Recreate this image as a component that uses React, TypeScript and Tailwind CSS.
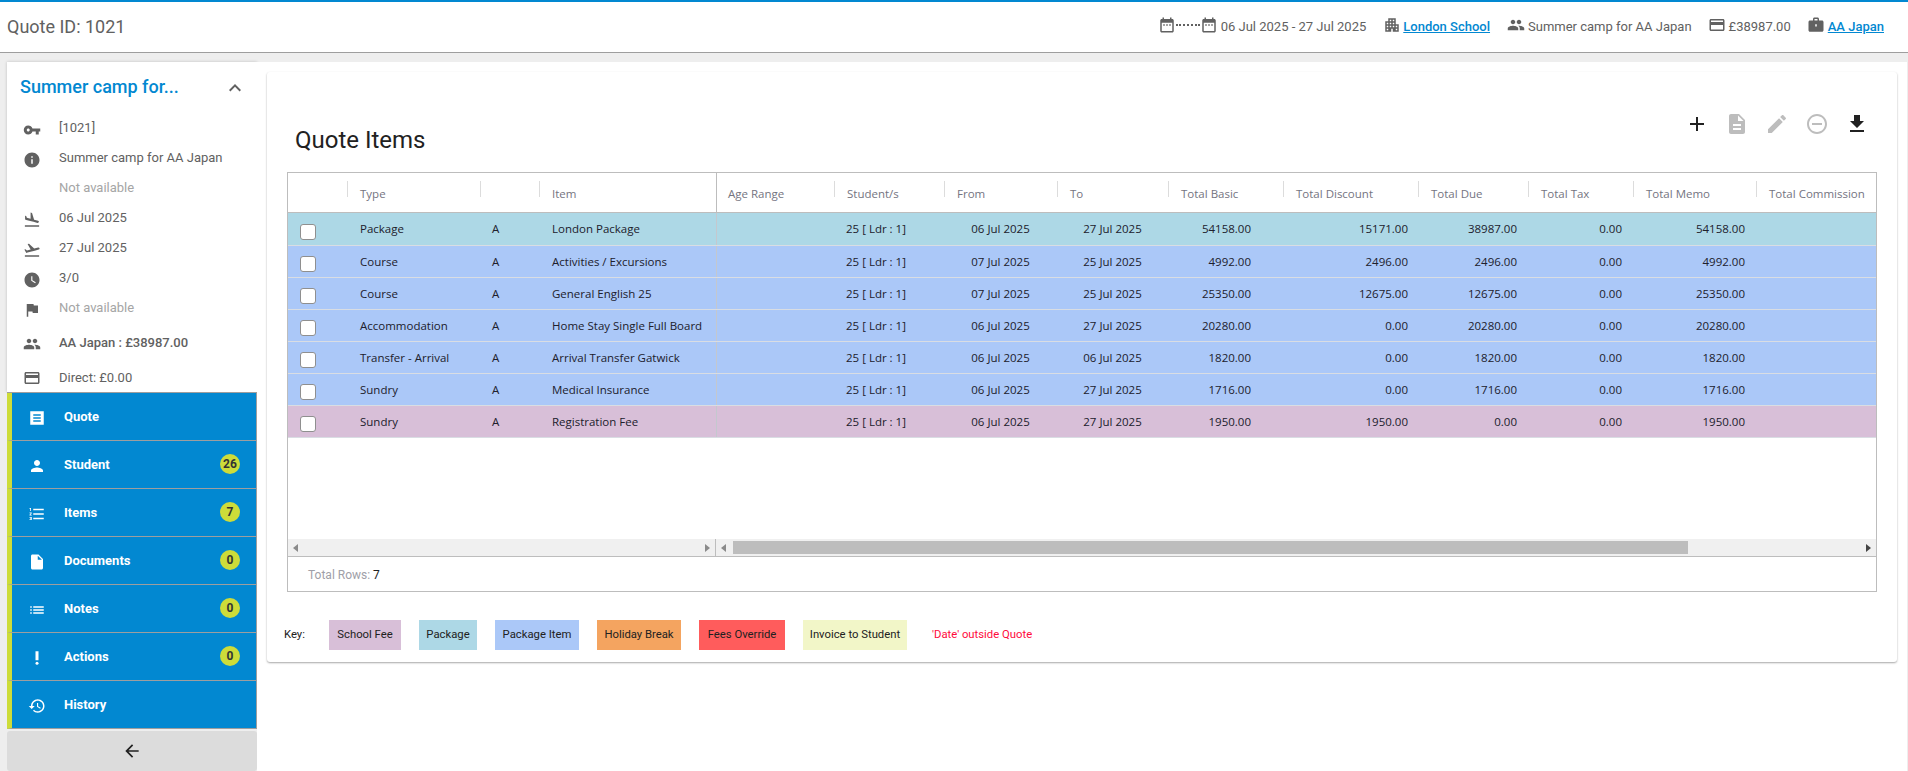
import type { ReactNode } from "react";

const icons: Record<string, ReactNode> = {
  key: <path d="M12.65 10C11.83 7.67 9.61 6 7 6c-3.31 0-6 2.69-6 6s2.69 6 6 6c2.61 0 4.83-1.67 5.65-4H17v4h4v-4h2v-4H12.65zM7 14c-1.1 0-2-.9-2-2s.9-2 2-2 2 .9 2 2-.9 2-2 2z" />,
  info: <path d="M12 2C6.48 2 2 6.48 2 12s4.48 10 10 10 10-4.48 10-10S17.52 2 12 2zm1 15h-2v-6h2v6zm0-8h-2V7h2v2z" />,
  land: <path d="M2.5 19h19v2h-19zm7.18-5.73l4.35 1.16 5.31 1.42c.8.21 1.62-.26 1.84-1.06.21-.8-.26-1.62-1.06-1.84l-5.31-1.42-2.76-9.02L10.12 2v8.28L5.15 8.95l-.93-2.32-1.45-.39v5.17l1.6.43 5.31 1.43z" />,
  takeoff: <path d="M2.5 19h19v2h-19zm19.57-9.36c-.21-.8-1.04-1.28-1.84-1.06L14.92 10l-6.9-6.43-1.93.51 4.14 7.17-4.97 1.33-1.97-1.54-1.45.39 1.82 3.16.77 1.33 1.6-.43 5.31-1.42 4.35-1.16L21 11.49c.81-.23 1.28-1.05 1.07-1.85z" />,
  clock: <path d="M12 2C6.5 2 2 6.5 2 12s4.5 10 10 10 10-4.5 10-10S17.5 2 12 2zm4.2 14.2L11 13V7h1.5v5.2l4.5 2.7-.8 1.3z" />,
  flag: <path d="M14.4 6L14 4H5v17h2v-7h5.6l.4 2h7V6z" />,
  people: <path d="M16 11c1.66 0 2.99-1.34 2.99-3S17.66 5 16 5c-1.66 0-3 1.34-3 3s1.34 3 3 3zm-8 0c1.66 0 2.99-1.34 2.99-3S9.66 5 8 5C6.34 5 5 6.34 5 8s1.34 3 3 3zm0 2c-2.33 0-7 1.17-7 3.5V19h14v-2.5c0-2.33-4.67-3.5-7-3.5zm8 0c-.29 0-.62.02-.97.05 1.16.84 1.97 1.97 1.97 3.45V19h6v-2.5c0-2.33-4.67-3.5-7-3.5z" />,
  card: <path d="M20 4H4c-1.11 0-1.99.89-1.99 2L2 18c0 1.11.89 2 2 2h16c1.11 0 2-.89 2-2V6c0-1.11-.89-2-2-2zm0 14H4v-6h16v6zm0-10H4V6h16v2z" />,
  quote: <path fillRule="evenodd" d="M3 3h18v18H3zM7 7v2h10V7zm0 4v2h10v-2zm0 4v2h10v-2z" />,
  person: <path d="M12 12c2.21 0 4-1.79 4-4s-1.79-4-4-4-4 1.79-4 4 1.79 4 4 4zm0 2c-2.67 0-8 1.34-8 4v2h16v-2c0-2.66-5.33-4-8-4z" />,
  numbered: <path d="M2 17h2v.5H3v1h1v.5H2v1h3v-4H2v1zm1-9h1V4H2v1h1v3zm-1 3h1.8L2 13.1v.9h3v-1H3.2L5 10.9V10H2v1zm5-6v2h14V5H7zm0 14h14v-2H7v2zm0-6h14v-2H7v2z" />,
  file: <path d="M6 2c-1.1 0-1.99.9-1.99 2L4 20c0 1.1.89 2 1.99 2H18c1.1 0 2-.9 2-2V8l-6-6H6zm7 7V3.5L18.5 9H13z" />,
  list: <path d="M3 13h2v-2H3v2zm0 4h2v-2H3v2zm0-8h2V7H3v2zm4 4h14v-2H7v2zm0 4h14v-2H7v2zM7 7v2h14V7H7z" />,
  priority: (
    <>
      <circle cx="12" cy="19" r="2" />
      <path d="M10 3h4v12h-4z" />
    </>
  ),
  history: <path d="M13 3c-4.97 0-9 4.03-9 9H1l3.89 3.89.07.14L9 12H6c0-3.87 3.13-7 7-7s7 3.13 7 7-3.13 7-7 7c-1.93 0-3.68-.79-4.94-2.06l-1.42 1.42C8.27 19.99 10.51 21 13 21c4.97 0 9-4.03 9-9s-4.03-9-9-9zm-1 5v5l4.28 2.54.72-1.21-3.5-2.08V8H12z" />,
  back: <path d="M20 11H7.83l5.59-5.59L12 4l-8 8 8 8 1.41-1.41L7.83 13H20v-2z" />,
  less: <path d="M12 8l-6 6 1.41 1.41L12 10.83l4.59 4.58L18 14z" />,
  date: <path d="M9 11H7v2h2v-2zm4 0h-2v2h2v-2zm4 0h-2v2h2v-2zm2-7h-1V2h-2v2H8V2H6v2H5c-1.11 0-1.99.9-1.99 2L3 20c0 1.1.89 2 2 2h14c1.1 0 2-.9 2-2V6c0-1.1-.9-2-2-2zm0 16H5V9h14v11z" />,
  city: <path d="M17 11V3H7v4H3v14h8v-4h2v4h8V11h-4zM7 19H5v-2h2v2zm0-4H5v-2h2v2zm0-4H5V9h2v2zm4 4H9v-2h2v2zm0-4H9V9h2v2zm0-4H9V5h2v2zm4 8h-2v-2h2v2zm0-4h-2V9h2v2zm0-4h-2V5h2v2zm4 12h-2v-2h2v2zm0-4h-2v-2h2v2z" />,
  bag: <path fillRule="evenodd" d="M20 6h-4V4c0-1.11-.89-2-2-2h-4c-1.11 0-2 .89-2 2v2H4c-1.11 0-1.99.89-1.99 2L2 19c0 1.11.89 2 2 2h16c1.11 0 2-.89 2-2V8c0-1.11-.89-2-2-2zm-6 0h-4V4h4v2zm-3 5h2v3h-2z" />,
  add: <path d="M19 13h-6v6h-2v-6H5v-2h6V5h2v6h6v2z" />,
  doc: <path d="M14 2H6c-1.1 0-1.99.9-1.99 2L4 20c0 1.1.89 2 1.99 2H18c1.1 0 2-.9 2-2V8l-6-6zm2 16H8v-2h8v2zm0-4H8v-2h8v2zm-3-5V3.5L18.5 9H13z" />,
  edit: <path d="M3 17.25V21h3.75L17.81 9.94l-3.75-3.75L3 17.25zM20.71 7.04c.39-.39.39-1.02 0-1.41l-2.34-2.34c-.39-.39-1.02-.39-1.41 0l-1.83 1.83 3.75 3.75 1.83-1.83z" />,
  remove: <path d="M7 11v2h10v-2H7zm5-9C6.48 2 2 6.48 2 12s4.48 10 10 10 10-4.48 10-10S17.52 2 12 2zm0 18c-4.41 0-8-3.59-8-8s3.59-8 8-8 8 3.59 8 8-3.59 8-8 8z" />,
  download: <path d="M19 9h-4V3H9v6H5l7 7 7-7zM5 18v2h14v-2H5z" />,
};

function Icon({ name, className }: { name: string; className: string }) {
  return (
    <svg viewBox="0 0 24 24" fill="currentColor" className={className}>
      {icons[name]}
    </svg>
  );
}

const gridCols =
  "grid grid-cols-[59px_133px_59px_177px_118px_110px_113px_111px_115px_135px_110px_105px_123px_120px]";

const headers = ["", "Type", "", "Item", "Age Range", "Student/s", "From", "To", "Total Basic", "Total Discount", "Total Due", "Total Tax", "Total Memo", "Total Commission"];

const rows = [
  { bg: "bg-[#add8e6]", h: "h-[33px]", type: "Package", item: "London Package", from: "06 Jul 2025", to: "27 Jul 2025", basic: "54158.00", disc: "15171.00", due: "38987.00" },
  { bg: "bg-[#abc8f8]", h: "h-[32px]", type: "Course", item: "Activities / Excursions", from: "07 Jul 2025", to: "25 Jul 2025", basic: "4992.00", disc: "2496.00", due: "2496.00" },
  { bg: "bg-[#abc8f8]", h: "h-[32px]", type: "Course", item: "General English 25", from: "07 Jul 2025", to: "25 Jul 2025", basic: "25350.00", disc: "12675.00", due: "12675.00" },
  { bg: "bg-[#abc8f8]", h: "h-[32px]", type: "Accommodation", item: "Home Stay Single Full Board", from: "06 Jul 2025", to: "27 Jul 2025", basic: "20280.00", disc: "0.00", due: "20280.00" },
  { bg: "bg-[#abc8f8]", h: "h-[32px]", type: "Transfer - Arrival", item: "Arrival Transfer Gatwick", from: "06 Jul 2025", to: "06 Jul 2025", basic: "1820.00", disc: "0.00", due: "1820.00" },
  { bg: "bg-[#abc8f8]", h: "h-[32px]", type: "Sundry", item: "Medical Insurance", from: "06 Jul 2025", to: "27 Jul 2025", basic: "1716.00", disc: "0.00", due: "1716.00" },
  { bg: "bg-[#d8bfd8]", h: "h-[32px]", type: "Sundry", item: "Registration Fee", from: "06 Jul 2025", to: "27 Jul 2025", basic: "1950.00", disc: "1950.00", due: "0.00" },
];

const infoRows = [
  { icon: "key", text: "[1021]" },
  { icon: "info", text: "Summer camp for AA Japan" },
  { icon: "", text: "Not available", muted: true },
  { icon: "land", text: "06 Jul 2025" },
  { icon: "takeoff", text: "27 Jul 2025" },
  { icon: "clock", text: "3/0" },
  { icon: "flag", text: "Not available", muted: true },
];

const navItems = [
  { icon: "quote", label: "Quote" },
  { icon: "person", label: "Student", badge: "26" },
  { icon: "numbered", label: "Items", badge: "7" },
  { icon: "file", label: "Documents", badge: "0" },
  { icon: "list", label: "Notes", badge: "0" },
  { icon: "priority", label: "Actions", badge: "0" },
  { icon: "history", label: "History" },
];

const legend = [
  { label: "School Fee", cls: "bg-[#d8bfd8] w-[72px] ml-[29px]" },
  { label: "Package", cls: "bg-[#add8e6] w-[58px] ml-[18px]" },
  { label: "Package Item", cls: "bg-[#abc8f8] w-[84px] ml-[18px]" },
  { label: "Holiday Break", cls: "bg-[#f4a460] w-[84px] ml-[18px]" },
  { label: "Fees Override", cls: "bg-[#ff5c5c] w-[86px] ml-[18px]" },
  { label: "Invoice to Student", cls: "bg-[#f2f6c8] w-[104px] ml-[18px]" },
];

function Header() {
  return (
    <header className="h-[53px] shrink-0 border-t-2 border-b border-t-[#0288d1] border-b-[#9e9e9e] bg-white flex items-center justify-between pl-[7px] pr-[24px] text-[#616161] text-[13px]">
      <div className="text-[18px] -mt-[1px]">Quote ID: 1021</div>
      <div className="flex items-center">
        <Icon name="date" className="w-[18px] h-[18px] -mt-1" />
        <span className="w-[24px] border-t-2 border-dotted border-[#616161] -mt-1" />
        <Icon name="date" className="w-[18px] h-[18px] -mt-1" />
        <span className="ml-[3px]">06 Jul 2025 - 27 Jul 2025</span>
        <Icon name="city" className="w-[18px] h-[18px] -mt-1 ml-[17px]" />
        <a className="ml-[2px] text-[#0288d1] underline font-medium">London School</a>
        <Icon name="people" className="w-[18px] h-[18px] -mt-1 ml-[17px]" />
        <span className="ml-[3px]">Summer camp for AA Japan</span>
        <Icon name="card" className="w-[18px] h-[18px] -mt-1 ml-[16px]" />
        <span className="ml-[3px]">£38987.00</span>
        <Icon name="bag" className="w-[18px] h-[18px] -mt-1 ml-[16px]" />
        <a className="ml-[3px] text-[#0288d1] underline font-medium">AA Japan</a>
      </div>
    </header>
  );
}

function Sidebar() {
  return (
    <aside className="w-[250px] ml-[7px] shrink-0 flex flex-col">
      <div className="bg-white h-[330px] shadow-[0_0_3px_rgba(0,0,0,0.2)] text-[13px] text-[#616161]">
        <div className="h-[52px] flex items-center justify-between pl-[13px] pr-[10px]">
          <span className="text-[18px] font-medium text-[#0288d1] -mt-[4px]">Summer camp for...</span>
          <Icon name="less" className="w-6 h-6 text-[#616161] -mt-[1px]" />
        </div>
        {infoRows.map((r, i) => (
          <div key={i} className="h-[30px] flex items-center pl-[13px]">
            <div className="w-[24px] h-[18px] flex justify-center mt-[1px]">
              {r.icon && <Icon name={r.icon} className="w-[18px] h-[18px]" />}
            </div>
            <span className={r.muted ? "ml-[15px] text-[#a5a5a5] -mt-[2px]" : "ml-[15px] -mt-[2px]"}>{r.text}</span>
          </div>
        ))}
        <div className="h-[30px] mt-[4px] flex items-center pl-[13px]">
          <div className="w-[24px] flex justify-center mt-[1px]">
            <Icon name="people" className="w-[18px] h-[18px]" />
          </div>
          <span className="ml-[15px] font-medium">AA Japan : £38987.00</span>
        </div>
        <div className="h-[30px] mt-[4px] flex items-center pl-[13px]">
          <div className="w-[24px] flex justify-center mt-[1px]">
            <Icon name="card" className="w-[18px] h-[18px]" />
          </div>
          <span className="ml-[15px] mt-[2px]">Direct: £0.00</span>
        </div>
      </div>
      <nav className="border-t border-[#9e9e9e]">
        {navItems.map((n) => (
          <div
            key={n.label}
            className="h-[48px] flex items-center bg-[#0288d1] border-l-[5px] border-l-[#cddc39] border-b border-b-[#9e9e9e] border-r border-r-[#9e9e9e] pl-[16px] pr-[16px] text-white text-[13px] font-bold"
          >
            <Icon name={n.icon} className="w-[18px] h-[18px] mt-[3px]" />
            <span className="ml-[18px] flex-1">{n.label}</span>
            {n.badge && (
              <span className="w-5 h-5 rounded-full bg-[#cddc39] text-[#333] text-[12px] font-bold flex items-center justify-center -mt-[2px]">
                {n.badge}
              </span>
            )}
          </div>
        ))}
      </nav>
      <div className="mt-[2px] flex-1 bg-[#dcdcdc] rounded-[3px] flex items-center justify-center">
        <Icon name="back" className="w-5 h-5 text-[#212121]" />
      </div>
    </aside>
  );
}

function ItemsGrid() {
  return (
    <div className="ml-[20px] w-[1590px] h-[420px] border border-[#bdbdbd] overflow-hidden flex flex-col font-['Open_Sans',sans-serif] text-[11.5px]">
      <div className={`${gridCols} h-[40px] shrink-0 border-b border-[#bdbdbd] text-[#74747f]`}>
        {headers.map((h, i) => (
          <div key={i} className={i === 4 ? "flex border-l border-[#bdbdbd]" : "flex"}>
            {i > 0 && i !== 4 && <span className="w-px h-4 mt-[8px] bg-[#dcdcdc]" />}
            <span className={i === 4 ? "ml-[11px] mt-[13px] leading-4 whitespace-nowrap" : "ml-3 mt-[13px] leading-4 whitespace-nowrap"}>{h}</span>
          </div>
        ))}
      </div>
      {rows.map((r, i) => (
        <div key={i} className={`${gridCols} ${r.h} ${r.bg} shrink-0 items-stretch border-b border-[#d9dde3] text-[#20202c]`}>
          <div className="flex items-center pl-[12px]">
            <input type="checkbox" className="appearance-none w-4 h-4 mt-[5px] bg-white border border-[#8f8f8f] rounded-[3px]" />
          </div>
          <div className="flex items-center pl-[13px] whitespace-nowrap">{r.type}</div>
          <div className="flex items-center pl-[12px]">A</div>
          <div className="flex items-center pl-[13px] whitespace-nowrap">{r.item}</div>
          <div className="border-l border-[#c4c8ce]" />
          <div className="flex items-center pl-[12px]">25 [ Ldr : 1]</div>
          <div className="flex items-center justify-center">{r.from}</div>
          <div className="flex items-center justify-center">{r.to}</div>
          <div className="flex items-center justify-end pr-[32px]">{r.basic}</div>
          <div className="flex items-center justify-end pr-[10px]">{r.disc}</div>
          <div className="flex items-center justify-end pr-[11px]">{r.due}</div>
          <div className="flex items-center justify-end pr-[11px]">0.00</div>
          <div className="flex items-center justify-end pr-[11px]">{r.basic}</div>
          <div />
        </div>
      ))}
      <div className="flex-1" />
      <div className="h-[18px] shrink-0 bg-[#f0f0f0] border-b border-[#bdbdbd] flex items-center">
        <div className="w-[428px] h-full flex items-center justify-between px-[5px] border-r border-[#bdbdbd] text-[#8a8a8a]">
          <span className="w-0 h-0 border-y-[4px] border-y-transparent border-r-[5px] border-r-current" />
          <span className="w-0 h-0 border-y-[4px] border-y-transparent border-l-[5px] border-l-current" />
        </div>
        <div className="flex-1 h-full flex items-center pl-[5px] pr-[5px] text-[#8a8a8a]">
          <span className="w-0 h-0 border-y-[4px] border-y-transparent border-r-[5px] border-r-current" />
          <div className="ml-[7px] w-[955px] h-[13px] bg-[#bdbdbd]" />
          <span className="ml-auto w-0 h-0 border-y-[4px] border-y-transparent border-l-[5px] border-l-[#444]" />
        </div>
      </div>
      <div className="h-[34px] shrink-0 flex items-center pl-[20px] pt-[2px] font-['Roboto',sans-serif] text-[12px] text-[#a0a0a8]">
        Total Rows:&nbsp;<span className="text-[#212121]">7</span>
      </div>
    </div>
  );
}

function Main() {
  return (
    <main className="flex-1 min-w-0 bg-white pt-[10px] pl-[10px]">
      <div className="w-[1630px] h-[590px] rounded-[3px] bg-white shadow-[0_1px_2px_rgba(0,0,0,0.35)]">
        <div className="h-[100px] flex items-start justify-between pl-[28px] pr-[28px]">
          <h1 className="mt-[52px] text-[24px] leading-8 text-[#212121]">Quote Items</h1>
          <div className="mt-[40px] flex gap-[16px]">
            <Icon name="add" className="w-6 h-6 text-[#212121]" />
            <Icon name="doc" className="w-6 h-6 text-[#bdbdbd]" />
            <Icon name="edit" className="w-6 h-6 text-[#bdbdbd]" />
            <Icon name="remove" className="w-6 h-6 text-[#bdbdbd]" />
            <Icon name="download" className="w-6 h-6 text-[#212121]" />
          </div>
        </div>
        <ItemsGrid />
        <div className="mt-[28px] ml-[17px] h-[30px] flex items-center font-['Roboto',sans-serif] text-[11.3px] text-[#212121]">
          <span className="w-[16px] whitespace-nowrap">Key:</span>
          {legend.map((l) => (
            <div key={l.label} className={`${l.cls} h-[30px] flex items-center justify-center whitespace-nowrap`}>
              {l.label}
            </div>
          ))}
          <span className="ml-[25px] text-[#ff0a3c]">'Date' outside Quote</span>
        </div>
      </div>
    </main>
  );
}

export default function App() {
  return (
    <div className="w-[1908px] h-[771px] overflow-hidden flex flex-col bg-[#eeeeee] font-['Roboto',sans-serif]">
      <Header />
      <div className="flex-1 min-h-0 flex pt-[9px] pr-[1px]">
        <Sidebar />
        <Main />
      </div>
    </div>
  );
}
